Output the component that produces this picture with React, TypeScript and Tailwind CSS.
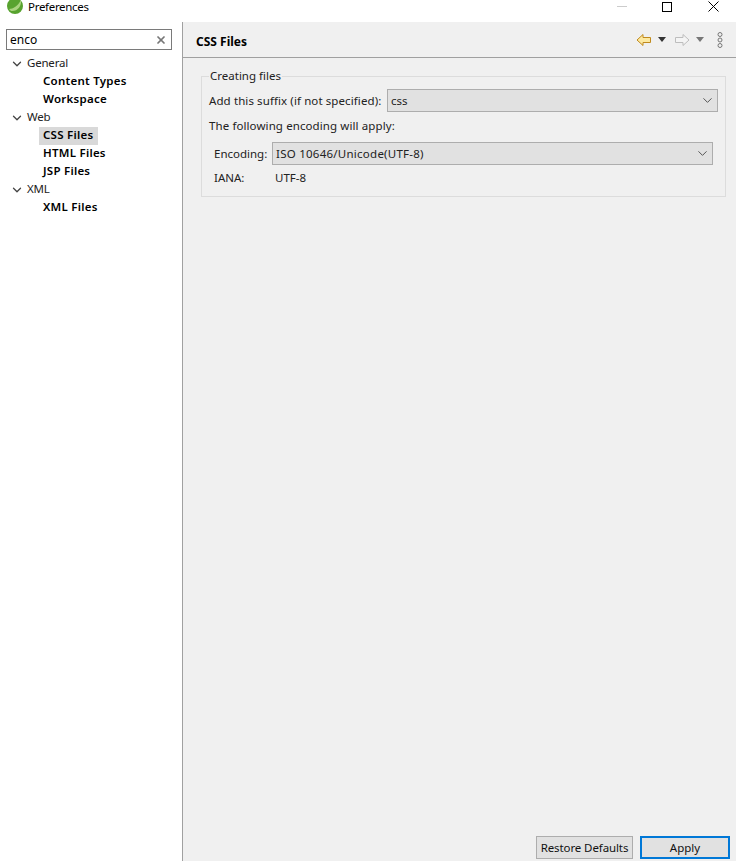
import React from "react";
import { ChevronDown, X } from "lucide-react";

function Leaf(props: { label: string; selected?: boolean }) {
    return (
        <div className="flex h-[18px] items-center pl-[39px]">
            <span className={"pl-[4px] pr-[5px] h-[18px] leading-[16px] font-semibold text-black tracking-[0.25px] " + (props.selected ? "bg-[#d9d9d9]" : "")}>{props.label}</span>
        </div>
    );
}

function Branch(props: { label: string }) {
    return (
        <div className="flex h-[18px] items-center pl-[10px] gap-[3px] text-[#222]">
            <ChevronDown size={14} strokeWidth={2.2} className="text-[#444]" />
            <span className="tracking-[-0.2px] mb-[2px]">{props.label}</span>
        </div>
    );
}

function Combo(props: { value: string; className: string; tracking: string }) {
    return (
        <div className={"flex h-[23px] items-center justify-between bg-[#e1e1e1] border border-[#adadad] pl-[3px] pr-[2px] text-[#222] " + props.className}>
            <span className={props.tracking}>{props.value}</span>
            <ChevronDown size={15} strokeWidth={1.6} className="text-[#555]" />
        </div>
    );
}

export default function App() {
    return (
        <div className="flex flex-col w-[736px] h-[861px] bg-white text-[11.5px] text-[#222] overflow-hidden" style={{ fontFamily: '"Noto Sans", "Liberation Sans", sans-serif' }}>
            {/* title bar */}
            <div className="flex h-[22px] items-start bg-white">
                <svg width="16" height="14" viewBox="0 0 16 14" className="ml-[7px]">
                    <circle cx="8" cy="6" r="8" fill="#58a32f" />
                    <path d="M2 9 C 6 9 11 6 14 0 C 15 6 10 12 4 11 Z" fill="#a9d37f" />
                </svg>
                <span className="ml-[5px] leading-[14px] text-black tracking-[-0.3px]">Preferences</span>
                <div className="ml-auto flex items-center mt-[1px]">
                    <div className="w-[10px] h-[1px] bg-[#ccc] mr-[35px]" />
                    <div className="w-[10px] h-[10px] border border-black mr-[36px]" />
                    <svg width="11" height="11" viewBox="0 0 11 11" className="mr-[17px]">
                        <path d="M0.5 0.5 L10.5 10.5 M10.5 0.5 L0.5 10.5" stroke="#000" strokeWidth="1" />
                    </svg>
                </div>
            </div>

            <div className="flex flex-1 min-h-0">
                {/* left tree */}
                <div className="w-[183px] border-r border-[#a0a0a0] bg-white">
                    <div className="flex ml-[6px] mt-[7px] w-[166px] h-[21px] items-center justify-between border border-[#7a7a7a] pl-[3px] pr-[4px] text-black">
                        <span className="text-[12px]">enco</span>
                        <X size={12} strokeWidth={3.5} className="text-[#777]" />
                    </div>
                    <div className="mt-[5px]">
                        <Branch label="General" />
                        <Leaf label="Content Types" />
                        <Leaf label="Workspace" />
                        <Branch label="Web" />
                        <Leaf label="CSS Files" selected />
                        <Leaf label="HTML Files" />
                        <Leaf label="JSP Files" />
                        <Branch label="XML" />
                        <Leaf label="XML Files" />
                    </div>
                </div>

                {/* right page */}
                <div className="flex flex-col flex-1 bg-[#f0f0f0]">
                    <div className="flex h-[36px] items-center border-b border-[#a0a0a0] pl-[13px] pr-[13px]">
                        <span className="font-bold text-black mt-[4px] text-[12px]">CSS Files</span>
                        <div className="ml-auto flex items-center">
                            <svg width="16" height="14" viewBox="0 0 16 14">
                                <path d="M1 7 L7 1.5 V4.5 H14.5 V9.5 H7 V12.5 Z" fill="#fde9a0" stroke="#c08a1e" strokeWidth="1" />
                            </svg>
                            <svg width="8" height="5" viewBox="0 0 8 5" className="ml-[6px]">
                                <path d="M0 0 H8 L4 5 Z" fill="#333" />
                            </svg>
                            <svg width="16" height="14" viewBox="0 0 16 14" className="ml-[8px]">
                                <path d="M15 7 L9 1.5 V4.5 H1.5 V9.5 H9 V12.5 Z" fill="#f4f4f4" stroke="#bdbdbd" strokeWidth="1" />
                            </svg>
                            <svg width="8" height="5" viewBox="0 0 8 5" className="ml-[6px]">
                                <path d="M0 0 H8 L4 5 Z" fill="#777" />
                            </svg>
                            <svg width="6" height="16" viewBox="0 0 6 16" className="ml-[13px]">
                                <circle cx="3" cy="2.5" r="2" fill="none" stroke="#777" />
                                <circle cx="3" cy="8" r="2" fill="none" stroke="#777" />
                                <circle cx="3" cy="13.5" r="2" fill="none" stroke="#777" />
                            </svg>
                        </div>
                    </div>

                    <fieldset className="ml-[18px] mr-[10px] mt-[11px] h-[128px] border border-[#dcdcdc] pl-[7px] pr-[7px]">
                        <legend className="px-[1px] leading-[14px] text-[#222]">Creating files</legend>
                        <div className="flex items-center mt-[6px]">
                            <span className="tracking-[0.1px]">Add this suffix (if not specified):</span>
                            <Combo value="css" tracking="" className="ml-auto w-[331px]" />
                        </div>
                        <div className="mt-[5px] h-[18px] leading-[18px] tracking-[0.1px]">The following encoding will apply:</div>
                        <div className="flex items-center mt-[7px] pl-[5px]">
                            <span>Encoding:</span>
                            <Combo value="ISO 10646/Unicode(UTF-8)" tracking="tracking-[0.25px]" className="ml-auto w-[441px] mr-[5px]" />
                        </div>
                        <div className="flex mt-[4px] pl-[5px] h-[18px] leading-[18px]">
                            <span className="w-[61px]">IANA:</span>
                            <span>UTF-8</span>
                        </div>
                    </fieldset>

                    <div className="mt-auto flex justify-end items-end pb-[2px] pr-[6px] gap-[7px]">
                        <button className="w-[97px] h-[23px] bg-[#e1e1e1] border border-[#adadad] text-[#111] tracking-[-0.1px]">Restore Defaults</button>
                        <button className="w-[90px] h-[23px] bg-[#e1e1e1] border-2 border-[#0078d7] text-[#111]">Apply</button>
                    </div>
                </div>
            </div>
        </div>
    );
}
